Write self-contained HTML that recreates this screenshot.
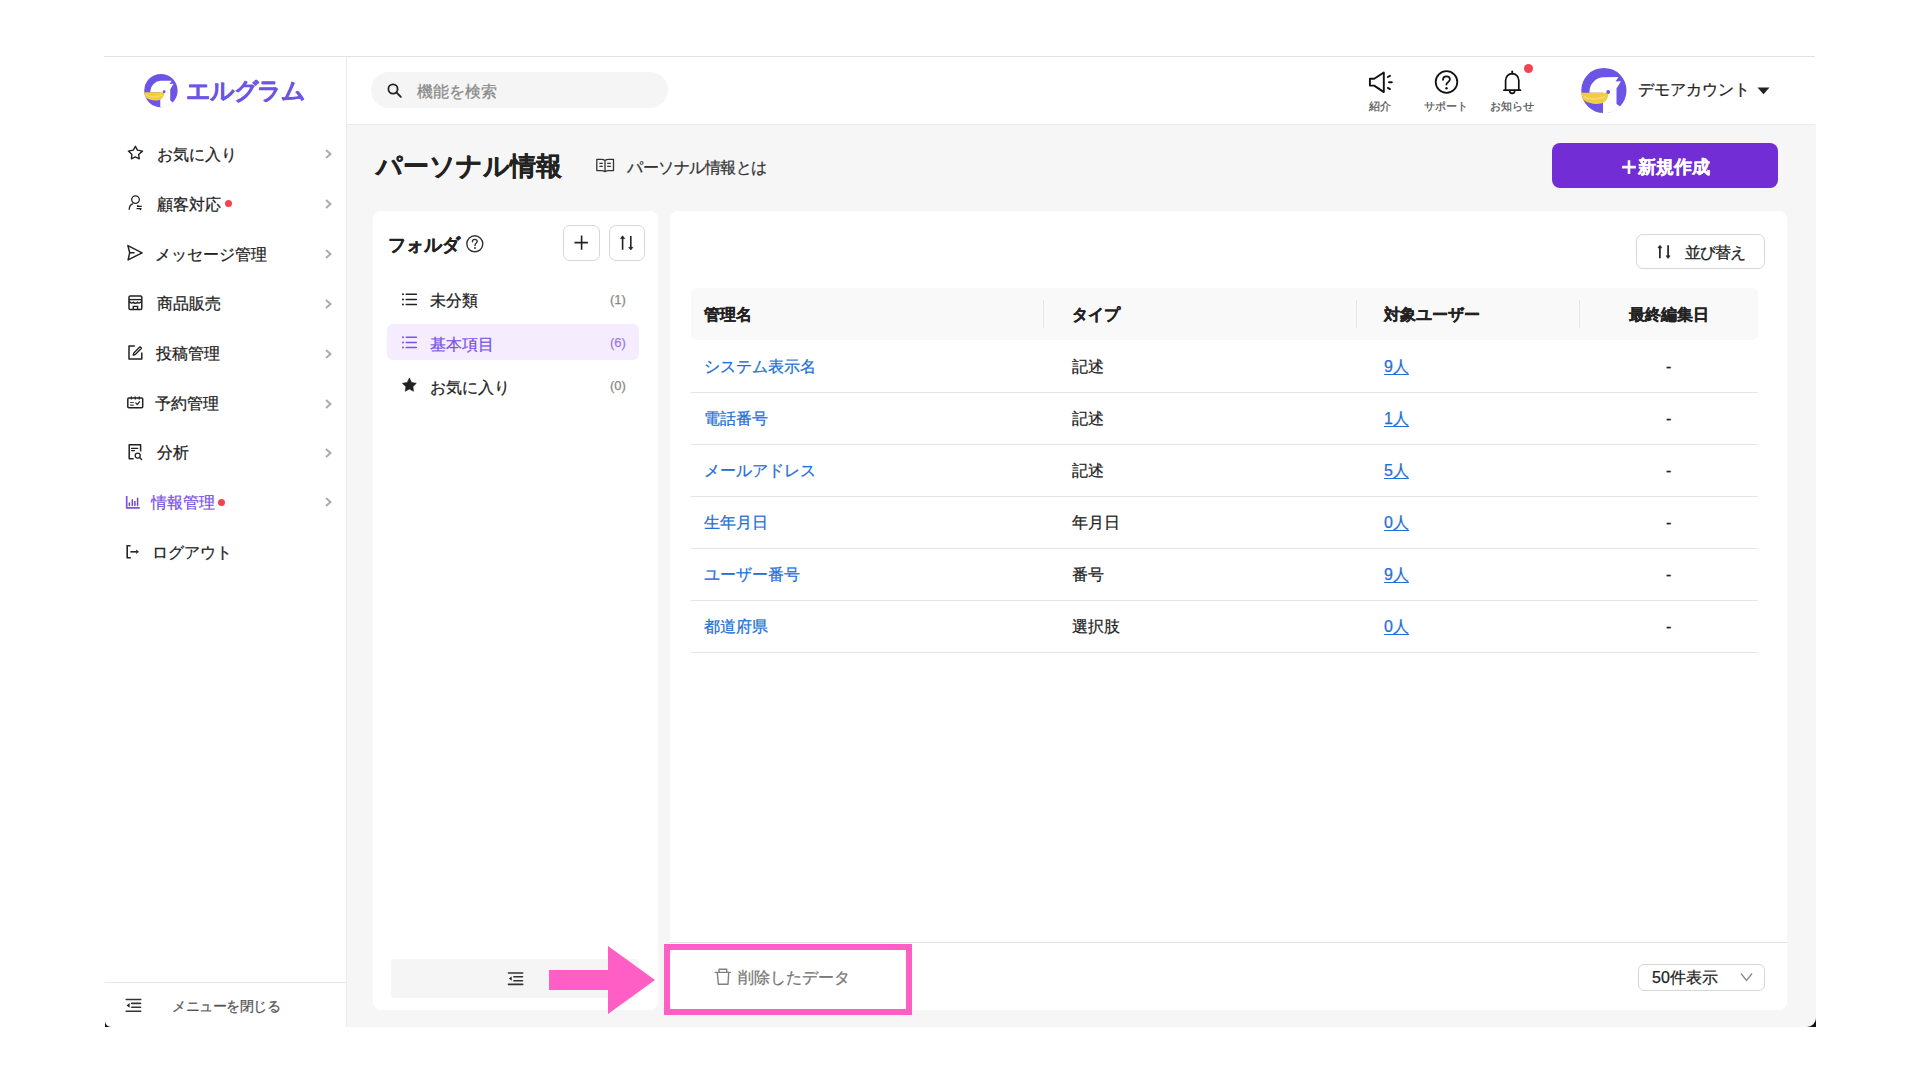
<!DOCTYPE html>
<html lang="ja">
<head>
<meta charset="utf-8">
<style>
*{box-sizing:border-box;margin:0;padding:0}
html,body{width:1920px;height:1080px;overflow:hidden;background:#fff}
body{position:relative;font-family:"Liberation Sans",sans-serif;color:#222}
.a{position:absolute}
.t{position:absolute;white-space:nowrap;line-height:1;-webkit-text-stroke:0.25px currentColor}
svg{position:absolute;overflow:visible}
.menu{font-size:16px;color:#222}
.rt{font-size:16px;color:#222}
.lk{font-size:16px;color:#1f6fd6}
.ul{text-decoration:underline;text-underline-offset:2px}
.th{font-size:16px;font-weight:bold;color:#222;margin-top:1px}
.hl{font-size:11px;color:#555}
.rowline{position:absolute;left:691px;width:1067px;height:1px;background:#e6e6e6}
.chev{position:absolute;left:324px}
</style>
</head>
<body>
<!-- frame -->
<div class="a" style="left:104px;top:56px;width:1711px;height:1px;background:#e2e2e2"></div>
<div class="a" style="left:347px;top:125px;width:1469px;height:902px;background:#f6f6f6"></div>
<div class="a" style="left:346px;top:57px;width:1px;height:970px;background:#ebebeb"></div>
<div class="a" style="left:347px;top:124px;width:1468px;height:1px;background:#ebebeb"></div>

<!-- logo -->
<svg style="left:143.5px;top:73.5px" width="34" height="34" viewBox="0 0 46 46">
  <circle cx="22.9" cy="22.5" r="22.6" fill="#6c54e4"/>
  <path d="M8.5 24.8 L8.5 23.5 A14.5 14.5 0 0 1 23 9.2 L37.5 9.1 L34.5 13.5 L40 13.3 L35.5 20.5 L35.5 36 L39.2 38.4 A22.6 22.6 0 0 1 22 45.1 L22 24.8 Z" fill="#fff"/>
  <path d="M0.4 24.8 L27.4 24.8 C27.6 30 24.5 34.5 20 35.6 C14.5 36.8 6 35.3 2.3 31.5 C1 29.5 0.5 27 0.4 24.8 Z" fill="#f1cd3f"/>
  <path d="M3 28.5 C8 31.5 15 32.5 24 28.5" fill="none" stroke="#f7e07a" stroke-width="1.2"/>
  <circle cx="27.2" cy="24" r="1.9" fill="#6c54e4"/>
</svg>
<div class="t" style="left:186px;top:79px;font-size:24px;font-weight:bold;color:#6c54e4;letter-spacing:-1.2px">エルグラム</div>

<!-- search -->
<div class="a" style="left:371px;top:72px;width:297px;height:36px;border-radius:18px;background:#f5f5f5"></div>
<svg style="left:387px;top:83px" width="15" height="15" viewBox="0 0 15 15"><circle cx="6" cy="6" r="4.6" fill="none" stroke="#222" stroke-width="1.8"/><path d="M9.4 9.4 L13.8 13.8" stroke="#222" stroke-width="1.9" stroke-linecap="round"/></svg>
<div class="t" style="left:417px;top:84px;font-size:16px;color:#8a8a8a">機能を検索</div>

<!-- header icons -->
<svg style="left:1364px;top:66px" width="34" height="32" viewBox="0 0 34 32">
  <path d="M5.9 12.8 L10.2 12.8 L19.8 6.5 L19.8 26.1 L10.2 19.6 L5.9 19.6 Z" fill="none" stroke="#111" stroke-width="1.9" stroke-linejoin="round"/>
  <path d="M23.8 11 L26 9.8 M25 16.3 L27.8 16.3 M23.8 21.9 L26 23.1" stroke="#111" stroke-width="1.9" stroke-linecap="round"/>
</svg>
<div class="t hl" style="left:1369px;top:101px">紹介</div>
<svg style="left:1430px;top:64px" width="34" height="34" viewBox="0 0 34 34">
  <circle cx="16.5" cy="18" r="10.8" fill="none" stroke="#111" stroke-width="1.8"/>
  <path d="M13 15.8 C13 13.6 14.6 12.4 16.4 12.4 C18.4 12.4 19.9 13.8 19.9 15.6 C19.9 17.9 16.4 18.3 16.4 20.6" fill="none" stroke="#111" stroke-width="1.8" stroke-linecap="round"/>
  <circle cx="16.5" cy="24.2" r="1.2" fill="#111"/>
</svg>
<div class="t hl" style="left:1424px;top:101px">サポート</div>
<svg style="left:1496px;top:60px" width="40" height="38" viewBox="0 0 40 38">
  <path d="M16.2 11.4 L16.2 13.7" stroke="#111" stroke-width="1.8" stroke-linecap="round"/>
  <path d="M9.6 29.9 L9.6 20.5 C9.6 16.6 12.5 13.6 16.2 13.6 C19.9 13.6 22.8 16.6 22.8 20.5 L22.8 29.9" fill="none" stroke="#111" stroke-width="1.7"/>
  <path d="M8 30.2 L24.4 30.2" stroke="#111" stroke-width="1.8" stroke-linecap="round"/>
  <path d="M13.6 30.8 A2.6 2.6 0 0 0 18.8 30.8" fill="none" stroke="#111" stroke-width="1.6"/>
</svg>
<div class="a" style="left:1523.6px;top:64.2px;width:9.2px;height:9.2px;border-radius:50%;background:#f2444f"></div>
<div class="t hl" style="left:1490px;top:101px">お知らせ</div>

<!-- avatar -->
<svg style="left:1581px;top:68px" width="46" height="46" viewBox="0 0 46 46">
  <circle cx="22.9" cy="22.5" r="22.6" fill="#6c54e4"/>
  <path d="M8.5 24.8 L8.5 23.5 A14.5 14.5 0 0 1 23 9.2 L37.5 9.1 L34.5 13.5 L40 13.3 L35.5 20.5 L35.5 36 L39.2 38.4 A22.6 22.6 0 0 1 22 45.1 L22 24.8 Z" fill="#fff"/>
  <path d="M0.4 24.8 L27.4 24.8 C27.6 30 24.5 34.5 20 35.6 C14.5 36.8 6 35.3 2.3 31.5 C1 29.5 0.5 27 0.4 24.8 Z" fill="#f1cd3f"/>
  <path d="M3 28.5 C8 31.5 15 32.5 24 28.5" fill="none" stroke="#f7e07a" stroke-width="1.2"/>
  <circle cx="27.2" cy="24" r="1.9" fill="#6c54e4"/>
</svg>
<div class="t" style="left:1638px;top:82px;font-size:16px;color:#222">デモアカウント</div>
<svg style="left:1757px;top:87px" width="13" height="8" viewBox="0 0 13 8"><path d="M0.5 0.5 L12.5 0.5 L6.5 7.2 Z" fill="#222"/></svg>

<!-- sidebar menu -->
<div class="menu">
<svg style="left:122px;top:140px" width="28" height="26" viewBox="0 0 28 26"><path d="M13.4 6.3 L15.4 10.1 L20.5 11.1 L16.6 14.5 L17.3 18.8 L13.3 16.9 L9.4 18.8 L9.9 14.5 L6.4 11.1 L11.3 10.1 Z" fill="none" stroke="#222" stroke-width="1.4" stroke-linejoin="round"/></svg>
<div class="t" style="left:157px;top:147px">お気に入り</div>
<svg style="left:122px;top:190px" width="28" height="26" viewBox="0 0 28 26"><circle cx="13.5" cy="9.6" r="3.8" fill="none" stroke="#222" stroke-width="1.3"/><path d="M10.6 13.9 C8.6 14.6 7.4 16.6 7.2 19.3" fill="none" stroke="#222" stroke-width="1.3" stroke-linecap="round"/><path d="M15 16.4 L19.8 16.4 M14.6 18.6 L19.4 18.6" stroke="#222" stroke-width="1.3"/><path d="M15.3 16.4 L16.3 15.2 M19.1 18.6 L18.2 20" stroke="#222" stroke-width="1.2"/></svg>
<div class="t" style="left:157px;top:197px">顧客対応</div>
<div class="a" style="left:224.5px;top:199.5px;width:7px;height:7px;border-radius:50%;background:#f2444f"></div>
<svg style="left:122px;top:240px" width="28" height="26" viewBox="0 0 28 26"><path d="M5.9 5.6 L20.1 12.8 L6.1 19.9 L7.7 12.8 Z" fill="none" stroke="#222" stroke-width="1.5" stroke-linejoin="round"/><path d="M7.7 12.8 L12 12.8" stroke="#222" stroke-width="1.5" stroke-linecap="round"/></svg>
<div class="t" style="left:155px;top:246.5px">メッセージ管理</div>
<svg style="left:122px;top:290px" width="28" height="26" viewBox="0 0 28 26"><rect x="7" y="6" width="12.8" height="13.5" rx="1.2" fill="none" stroke="#222" stroke-width="1.5"/><path d="M7 9.6 L19.8 9.6" stroke="#222" stroke-width="1.4"/><path d="M7 11 Q9.1 14.2 11.3 12.2 Q13.4 14.2 15.6 12.2 Q17.8 14.2 19.8 11" fill="none" stroke="#222" stroke-width="1.4"/><path d="M11.3 19.5 L11.3 16.4 L15.6 16.4 L15.6 19.5" fill="none" stroke="#222" stroke-width="1.4"/></svg>
<div class="t" style="left:157px;top:296px">商品販売</div>
<svg style="left:122px;top:340px" width="28" height="26" viewBox="0 0 28 26"><path d="M12.8 6 L7 6 L7 19 L19.8 19 L19.8 12.5" fill="none" stroke="#222" stroke-width="1.5" stroke-linejoin="round"/><path d="M11.2 15 L11.8 13 L18 6.8 L19.5 8.3 L13.3 14.5 Z" fill="none" stroke="#222" stroke-width="1.3" stroke-linejoin="round"/></svg>
<div class="t" style="left:156px;top:346px">投稿管理</div>
<svg style="left:122px;top:390px" width="28" height="26" viewBox="0 0 28 26"><rect x="5.8" y="8" width="14.9" height="9.8" rx="1" fill="none" stroke="#222" stroke-width="1.5"/><path d="M9.4 6.5 L9.4 9.4 M13.3 6.5 L13.3 9.4 M17.3 6.5 L17.3 9.4" stroke="#222" stroke-width="1.3"/><path d="M8.2 12.5 L11.8 12.5 M8.2 15.2 L11.8 15.2" stroke="#444" stroke-width="1.2"/><path d="M13.5 12.6 L15.3 14.6 L17.8 11.4" fill="none" stroke="#222" stroke-width="1.3"/></svg>
<div class="t" style="left:155px;top:396px">予約管理</div>
<svg style="left:122px;top:439px" width="28" height="26" viewBox="0 0 28 26"><path d="M11.6 19.8 L7.2 19.8 L7.2 5.8 L18.6 5.8 L18.6 12.5" fill="none" stroke="#222" stroke-width="1.5" stroke-linejoin="round"/><path d="M9.6 9.4 L15.7 9.4 M9.6 11.6 L12.5 11.6" stroke="#222" stroke-width="1.3" stroke-linecap="round"/><circle cx="15.7" cy="16.6" r="2.5" fill="none" stroke="#222" stroke-width="1.3"/><path d="M17.6 18.6 L19.6 20.5" stroke="#222" stroke-width="1.4" stroke-linecap="round"/></svg>
<div class="t" style="left:157px;top:445px">分析</div>
<svg style="left:120px;top:489px" width="28" height="26" viewBox="0 0 28 26"><path d="M6.7 7 L6.7 18.8 L19.8 18.8" fill="none" stroke="#7a52e6" stroke-width="1.7"/><path d="M9.4 14 L9.4 16.4 M12.3 10.8 L12.3 16.4 M14.9 12.5 L14.9 16.4 M17.6 9.2 L17.6 16.4" stroke="#6a46d8" stroke-width="1.5" stroke-linecap="round"/></svg>
<div class="t" style="left:151px;top:495px;color:#7a52e6">情報管理</div>
<div class="a" style="left:217.5px;top:498.5px;width:7px;height:7px;border-radius:50%;background:#f2444f"></div>
<svg style="left:120px;top:539px" width="28" height="26" viewBox="0 0 28 26"><path d="M10.6 6.7 L7.2 6.7 L7.2 18.8 L10.8 18.8" fill="none" stroke="#222" stroke-width="1.6"/><path d="M10.4 12.8 L16.6 12.8" stroke="#222" stroke-width="1.6"/><path d="M16.2 10.6 L18.9 12.8 L16.2 15 Z" fill="#222"/></svg>
<div class="t" style="left:152px;top:545px">ログアウト</div>
</div>
<!-- chevrons -->
<svg class="chev" style="top:149px" width="9" height="10" viewBox="0 0 9 10"><path d="M2 1 L6.5 5 L2 9" fill="none" stroke="#ababab" stroke-width="2"/></svg>
<svg class="chev" style="top:199px" width="9" height="10" viewBox="0 0 9 10"><path d="M2 1 L6.5 5 L2 9" fill="none" stroke="#ababab" stroke-width="2"/></svg>
<svg class="chev" style="top:249px" width="9" height="10" viewBox="0 0 9 10"><path d="M2 1 L6.5 5 L2 9" fill="none" stroke="#ababab" stroke-width="2"/></svg>
<svg class="chev" style="top:298.5px" width="9" height="10" viewBox="0 0 9 10"><path d="M2 1 L6.5 5 L2 9" fill="none" stroke="#ababab" stroke-width="2"/></svg>
<svg class="chev" style="top:348.5px" width="9" height="10" viewBox="0 0 9 10"><path d="M2 1 L6.5 5 L2 9" fill="none" stroke="#ababab" stroke-width="2"/></svg>
<svg class="chev" style="top:398.5px" width="9" height="10" viewBox="0 0 9 10"><path d="M2 1 L6.5 5 L2 9" fill="none" stroke="#ababab" stroke-width="2"/></svg>
<svg class="chev" style="top:447.5px" width="9" height="10" viewBox="0 0 9 10"><path d="M2 1 L6.5 5 L2 9" fill="none" stroke="#ababab" stroke-width="2"/></svg>
<svg class="chev" style="top:497px" width="9" height="10" viewBox="0 0 9 10"><path d="M2 1 L6.5 5 L2 9" fill="none" stroke="#ababab" stroke-width="2"/></svg>

<!-- sidebar bottom -->
<div class="a" style="left:105px;top:982px;width:241px;height:1px;background:#e6e6e6"></div>
<svg style="left:120px;top:992px" width="28" height="28" viewBox="0 0 28 28"><path d="M6.2 7.5 L20.7 7.5 M11.7 11.4 L20.5 11.4 M11.7 15.3 L20.5 15.3 M6.2 19.2 L20.7 19.2" stroke="#333" stroke-width="1.6" stroke-linecap="round"/><path d="M9.6 11.1 L6.6 13.5 L9.6 15.8 Z" fill="#222"/></svg>
<div class="t" style="left:172px;top:998.5px;font-size:14px;letter-spacing:-0.5px;color:#555">メニューを閉じる</div>

<!-- page title -->
<div class="t" style="left:376px;top:153px;font-size:26px;font-weight:bold;color:#222">パーソナル情報</div>
<svg style="left:590px;top:150px" width="30" height="30" viewBox="0 0 30 30"><path d="M6.8 9.4 L11.5 9.4 C13 9.4 14 9.8 15 10.6 C16 9.8 17 9.4 18.5 9.4 L23.5 9.4 L23.5 20.6 L18.5 20.6 C17 20.6 16 21 15 21.7 C14 21 13 20.6 11.5 20.6 L6.8 20.6 Z M15 10.6 L15 21.7" fill="none" stroke="#333" stroke-width="1.3" stroke-linejoin="round"/><path d="M9.4 13.3 L12.8 13.3 M9.4 16.4 L12.8 16.4 M17.2 13.3 L20.8 13.3 M17.2 16.4 L20.8 16.4" stroke="#333" stroke-width="1.2"/></svg>
<div class="t" style="left:627px;top:159.5px;font-size:16px;letter-spacing:-0.5px;color:#333">パーソナル情報とは</div>

<!-- new button -->
<div class="a" style="left:1552px;top:143px;width:226px;height:45px;border-radius:8px;background:#722dd5"></div>
<svg style="left:1621px;top:158.5px" width="16" height="16" viewBox="0 0 16 16"><path d="M8 1.2 L8 15 M1.1 8.1 L14.9 8.1" stroke="#fff" stroke-width="2.6"/></svg>
<div class="t" style="left:1638px;top:158px;font-size:18px;font-weight:bold;color:#fff">新規作成</div>

<!-- folder panel -->
<div class="a" style="left:373px;top:211px;width:285px;height:799px;border-radius:8px;background:#fff"></div>
<div class="t" style="left:388px;top:235.5px;font-size:18px;font-weight:bold;color:#222">フォルダ</div>
<svg style="left:465px;top:235px" width="20" height="18" viewBox="0 0 20 18"><circle cx="9.8" cy="8.8" r="8" fill="none" stroke="#333" stroke-width="1.4"/><path d="M7.4 6.8 C7.4 5.2 8.5 4.4 9.8 4.4 C11.2 4.4 12.2 5.3 12.2 6.6 C12.2 8.2 10 8.5 10 10.4" fill="none" stroke="#333" stroke-width="1.4" stroke-linecap="round"/><circle cx="10" cy="13" r="0.9" fill="#333"/></svg>
<div class="a" style="left:563px;top:225px;width:36.5px;height:36px;border:1px solid #d6d6d6;border-radius:7px"></div>
<svg style="left:560px;top:222px" width="45" height="42" viewBox="0 0 45 42"><path d="M21.6 13.6 L21.6 27.7 M14.5 20.6 L27.9 20.6" stroke="#222" stroke-width="1.6"/></svg>
<div class="a" style="left:608.5px;top:225px;width:36.5px;height:36px;border:1px solid #d6d6d6;border-radius:7px"></div>
<svg style="left:560px;top:222px" width="90" height="42" viewBox="0 0 90 42"><path d="M62.6 15.5 L62.6 27.7 M70.8 14 L70.8 26" stroke="#222" stroke-width="1.6"/><path d="M60.4 16.6 L62.6 13.8 L64.8 16.6 Z M68.7 25.3 L70.8 28 L72.9 25.3 Z" fill="#222" stroke="#222" stroke-width="0.6" stroke-linejoin="round"/></svg>

<svg style="left:396px;top:286px" width="28" height="26" viewBox="0 0 28 26"><path d="M10.2 8.3 L20.4 8.3 M10.2 13.4 L20.4 13.4 M10.2 18.4 L20.4 18.4" stroke="#222" stroke-width="1.5" stroke-linecap="round"/><circle cx="7" cy="8.3" r="1" fill="#222"/><circle cx="7" cy="13.4" r="1" fill="#222"/><circle cx="7" cy="18.4" r="1" fill="#222"/></svg>
<div class="t" style="left:430px;top:293px;font-size:16px;color:#222">未分類</div>
<div class="t" style="left:610px;top:292.5px;font-size:13px;color:#888">(1)</div>

<div class="a" style="left:387px;top:324px;width:252px;height:36px;border-radius:6px;background:#f5edfd"></div>
<svg style="left:396px;top:329px" width="28" height="26" viewBox="0 0 28 26"><path d="M10.2 8.3 L20.4 8.3 M10.2 13.4 L20.4 13.4 M10.2 18.4 L20.4 18.4" stroke="#7a52e6" stroke-width="1.5" stroke-linecap="round"/><circle cx="7" cy="8.3" r="1" fill="#7a52e6"/><circle cx="7" cy="13.4" r="1" fill="#7a52e6"/><circle cx="7" cy="18.4" r="1" fill="#7a52e6"/></svg>
<div class="t" style="left:430px;top:336.5px;font-size:16px;color:#7a52e6">基本項目</div>
<div class="t" style="left:610px;top:335.5px;font-size:13px;color:#9a7ae6">(6)</div>

<svg style="left:396px;top:372px" width="28" height="26" viewBox="0 0 28 26"><path d="M13.4 6 L15.6 10.5 L20.3 11.3 L16.9 14.7 L17.6 19.3 L13.4 17.1 L9.2 19.3 L9.9 14.7 L6.4 11.3 L11.2 10.5 Z" fill="#222" stroke="#222" stroke-width="0.6" stroke-linejoin="round"/></svg>
<div class="t" style="left:430px;top:379.5px;font-size:16px;color:#222">お気に入り</div>
<div class="t" style="left:610px;top:378.5px;font-size:13px;color:#888">(0)</div>

<div class="a" style="left:391px;top:959px;width:248px;height:39px;border-radius:4px;background:#f5f5f5"></div>
<svg style="left:502px;top:965px" width="28" height="28" viewBox="0 0 28 28"><path d="M6.5 8 L20.7 8 M11.9 11.8 L20.5 11.8 M11.9 15.7 L20.5 15.7 M6.5 19.4 L20.7 19.4" stroke="#333" stroke-width="1.6" stroke-linecap="round"/><path d="M9.7 11.4 L6.9 13.6 L9.7 15.8 Z" fill="#222"/></svg>

<!-- table panel -->
<div class="a" style="left:670px;top:211px;width:1117px;height:799px;border-radius:8px;background:#fff"></div>
<div class="a" style="left:1636px;top:234px;width:129px;height:35px;border:1px solid #d6d6d6;border-radius:7px;background:#fff"></div>
<svg style="left:1650px;top:238px" width="30" height="26" viewBox="0 0 30 26"><path d="M9.9 9 L9.9 20.2 M18.1 7.2 L18.1 18.4" stroke="#222" stroke-width="1.7"/><path d="M7.9 9.8 L9.9 7.2 L11.9 9.8 Z M16.1 17.8 L18.1 20.5 L20.1 17.8 Z" fill="#222" stroke="#222" stroke-width="0.6" stroke-linejoin="round"/></svg>
<div class="t" style="left:1685px;top:245px;font-size:16px;letter-spacing:-1px;color:#222">並び替え</div>

<div class="a" style="left:691px;top:288px;width:1067px;height:52px;border-radius:6px;background:#f9f9f9"></div>
<div class="a" style="left:1043px;top:300px;width:1px;height:28px;background:#e4e4e4"></div>
<div class="a" style="left:1356px;top:300px;width:1px;height:28px;background:#e4e4e4"></div>
<div class="a" style="left:1579px;top:300px;width:1px;height:28px;background:#e4e4e4"></div>
<div class="t th" style="left:704px;top:306px">管理名</div>
<div class="t th" style="left:1072px;top:306px">タイプ</div>
<div class="t th" style="left:1384px;top:306px">対象ユーザー</div>
<div class="t th" style="left:1629px;top:306px">最終編集日</div>

<div class="rowline" style="top:392px"></div>
<div class="rowline" style="top:444px"></div>
<div class="rowline" style="top:496px"></div>
<div class="rowline" style="top:548px"></div>
<div class="rowline" style="top:600px"></div>
<div class="rowline" style="top:652px"></div>

<div class="t lk" style="left:704px;top:359px">システム表示名</div>
<div class="t rt" style="left:1072px;top:359px">記述</div>
<div class="t lk ul" style="left:1384px;top:359px">9人</div>
<div class="t rt" style="left:1666px;top:359px">-</div>

<div class="t lk" style="left:704px;top:411px">電話番号</div>
<div class="t rt" style="left:1072px;top:411px">記述</div>
<div class="t lk ul" style="left:1384px;top:411px">1人</div>
<div class="t rt" style="left:1666px;top:411px">-</div>

<div class="t lk" style="left:704px;top:463px">メールアドレス</div>
<div class="t rt" style="left:1072px;top:463px">記述</div>
<div class="t lk ul" style="left:1384px;top:463px">5人</div>
<div class="t rt" style="left:1666px;top:463px">-</div>

<div class="t lk" style="left:704px;top:515px">生年月日</div>
<div class="t rt" style="left:1072px;top:515px">年月日</div>
<div class="t lk ul" style="left:1384px;top:515px">0人</div>
<div class="t rt" style="left:1666px;top:515px">-</div>

<div class="t lk" style="left:704px;top:567px">ユーザー番号</div>
<div class="t rt" style="left:1072px;top:567px">番号</div>
<div class="t lk ul" style="left:1384px;top:567px">9人</div>
<div class="t rt" style="left:1666px;top:567px">-</div>

<div class="t lk" style="left:704px;top:619px">都道府県</div>
<div class="t rt" style="left:1072px;top:619px">選択肢</div>
<div class="t lk ul" style="left:1384px;top:619px">0人</div>
<div class="t rt" style="left:1666px;top:619px">-</div>

<!-- footer -->
<div class="a" style="left:670px;top:942px;width:1117px;height:1px;background:#e2e2e2"></div>
<svg style="left:708px;top:962px" width="28" height="28" viewBox="0 0 28 28"><path d="M7.3 10.4 L22.3 10.4 M11.1 10.2 L11.1 7.3 L18.7 7.3 L18.7 10.2 M9.3 10.9 L10.4 22.3 L20 22.3 L20.7 10.9" fill="none" stroke="#808080" stroke-width="1.4" stroke-linejoin="round" stroke-linecap="round"/></svg>
<div class="t" style="left:738px;top:970px;font-size:16px;color:#777">削除したデータ</div>

<div class="a" style="left:1638px;top:963.5px;width:127px;height:27.5px;border:1.3px solid #d6d6d6;border-radius:6px;background:#fff"></div>
<div class="t" style="left:1652px;top:970px;font-size:16px;color:#222">50件表示</div>
<svg style="left:1740px;top:972px" width="13" height="10" viewBox="0 0 13 10"><path d="M1 1.5 L6.5 8.5 L12 1.5" fill="none" stroke="#888" stroke-width="1.3"/></svg>

<!-- annotation -->
<div class="a" style="left:664px;top:944px;width:248px;height:71px;border:6.5px solid #ff5ec4"></div>
<svg style="left:548px;top:946px" width="108" height="68" viewBox="0 0 108 68"><path d="M1 24 L60 24 L60 0 L107 34 L60 68 L60 44 L1 44 Z" fill="#ff5ec4"/></svg>

<!-- corner artifacts -->
<svg style="left:105px;top:1021px" width="6" height="6" viewBox="0 0 6 6"><path d="M0 0 A6 6 0 0 0 6 6 L0 6 Z" fill="#111"/></svg>
<svg style="left:1807px;top:1018px" width="9" height="9" viewBox="0 0 9 9"><path d="M9 0 A9 9 0 0 1 0 9 L9 9 Z" fill="#111"/></svg>
</body>
</html>
